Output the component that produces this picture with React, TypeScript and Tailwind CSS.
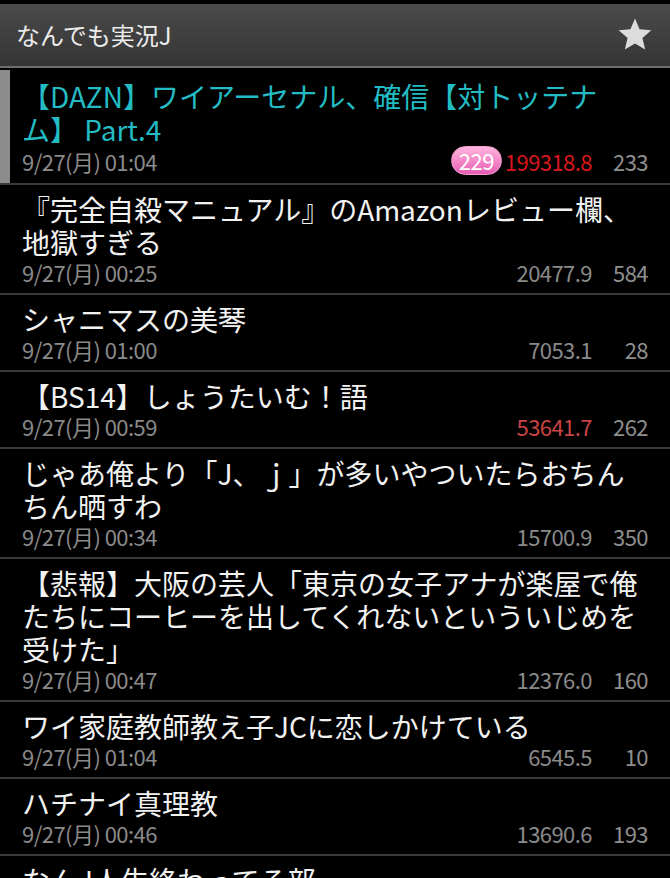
type Thread = {
  title: string;
  date: string;
  speed: string;
  count: number;
  unread?: number;
  hot?: "strong" | "soft";
  active?: boolean;
};

const threads: Thread[] = [
  {
    title: "【DAZN】ワイアーセナル、確信【対トッテナム】 Part.4",
    date: "9/27(月) 01:04",
    speed: "199318.8",
    count: 233,
    unread: 229,
    hot: "strong",
    active: true,
  },
  { title: "『完全自殺マニュアル』のAmazonレビュー欄、地獄すぎる", date: "9/27(月) 00:25", speed: "20477.9", count: 584 },
  { title: "シャニマスの美琴", date: "9/27(月) 01:00", speed: "7053.1", count: 28 },
  { title: "【BS14】しょうたいむ！語", date: "9/27(月) 00:59", speed: "53641.7", count: 262, hot: "soft" },
  { title: "じゃあ俺より「J、ｊ」が多いやついたらおちんちん晒すわ", date: "9/27(月) 00:34", speed: "15700.9", count: 350 },
  {
    title: "【悲報】大阪の芸人「東京の女子アナが楽屋で俺たちにコーヒーを出してくれないといういじめを受けた」",
    date: "9/27(月) 00:47",
    speed: "12376.0",
    count: 160,
  },
  { title: "ワイ家庭教師教え子JCに恋しかけている", date: "9/27(月) 01:04", speed: "6545.5", count: 10 },
  { title: "ハチナイ真理教", date: "9/27(月) 00:46", speed: "13690.6", count: 193 },
  { title: "なんJ人生終わってる部", date: "9/27(月) 00:41", speed: "9876.2", count: 88 },
];

const StarIcon = () => (
  <svg width="38" height="38" viewBox="0 0 24 24">
    <polygon
      points="12,1.6 14.9,8.4 22.3,9 16.7,13.9 18.4,21.2 12,17.3 5.6,21.2 7.3,13.9 1.7,9 9.1,8.4"
      fill="#dcdcdc"
    />
  </svg>
);

const ThreadRow = ({ thread }: { thread: Thread }) => {
  const speedColor =
    thread.hot === "strong" ? "text-[#d8161c]" : thread.hot === "soft" ? "text-[#c94444]" : "text-[#8a8a8a]";

  return (
    <div className="flex border-b-2 border-[#3a3a3a]">
      {/* ACTIVE MARKER */}
      <div className={thread.active ? "w-[10px] shrink-0 bg-[#8c8c8c]" : "w-[10px] shrink-0"} />
      <div className={thread.active ? "flex-1 pl-[12px] pr-[22px] pt-[10px] pb-[8px]" : "flex-1 pl-[12px] pr-[22px] pt-[8px] pb-[8px]"}>
        <p
          className={
            thread.active
              ? "text-[28px] leading-[33px] text-[#23bcc4]"
              : "text-[28px] leading-[33px] text-[#f2f2f2]"
          }
        >
          {thread.title}
        </p>
        <div className="flex items-center text-[22px] leading-[26px]">
          <span className="text-[#8a8a8a] tracking-tight">{thread.date}</span>
          <div className="flex-1" />
          {thread.unread && (
            <span className="mr-[3px] rounded-full bg-gradient-to-b from-[#ffb4de] to-[#e55cb2] px-[7px] leading-[27px] text-white border border-[#f7a0d2] tracking-tight">
              {thread.unread}
            </span>
          )}
          <span className={`${speedColor} tracking-tight`}>{thread.speed}</span>
          <span className="w-[56px] text-right text-[#8f8f8f] tracking-tight">{thread.count}</span>
        </div>
      </div>
    </div>
  );
};

export default function App() {
  return (
    <div
      className="w-[670px] h-[878px] overflow-hidden bg-black"
      style={{ fontFamily: '"Noto Sans CJK JP", "Noto Sans", sans-serif' }}
    >
      {/* HEADER */}
      <div className="pt-[4px]">
        <div className="flex h-[64px] items-center justify-between bg-gradient-to-b from-[#4a4a4a] to-[#353535] border-b-2 border-[#6e6e6e] pl-[16px] pr-[16px]">
          <h1 className="text-[24px] text-[#ececec]">なんでも実況J</h1>
          <StarIcon />
        </div>
      </div>

      {/* THREAD LIST */}
      <div className="mt-[2px]">
        {threads.map((thread, idx) => (
          <ThreadRow key={idx} thread={thread} />
        ))}
      </div>
    </div>
  );
}
